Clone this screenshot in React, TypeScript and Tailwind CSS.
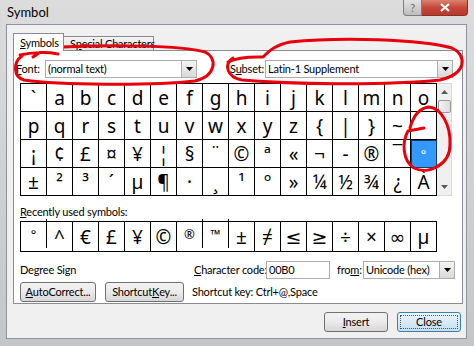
import React from "react";

// Word "Symbol" dialog, Windows 7 basic theme
const ui = "font-['Lato','Noto_Sans',sans-serif] text-[11px] tracking-[-0.2px] leading-[16px] text-black whitespace-nowrap";
const glyph = "font-['Noto_Sans','DejaVu_Sans',sans-serif] tracking-normal";

const rows: string[][] = [
  ["`", "a", "b", "c", "d", "e", "f", "g", "h", "i", "j", "k", "l", "m", "n", "o"],
  ["p", "q", "r", "s", "t", "u", "v", "w", "x", "y", "z", "{", "|", "}", "~", "\u00a0"],
  ["¡", "¢", "£", "¤", "¥", "¦", "§", "¨", "©", "ª", "«", "¬", "-", "®", "¯", "°"],
  ["±", "²", "³", "´", "µ", "¶", "·", "¸", "¹", "º", "»", "¼", "½", "¾", "¿", "À"],
];

const recent = ["°", "^", "€", "£", "¥", "©", "®", "™", "±", "≠", "≤", "≥", "÷", "×", "∞", "µ"];

const DropArrow = () => (
  <div className="w-[15px] h-full border-l border-[#abadb3] bg-gradient-to-b from-[#f4f4f4] to-[#d9d9d9] flex items-center justify-center">
    <svg width="7" height="4" viewBox="0 0 7 4">
      <path d="M0 0 H7 L3.5 4 Z" fill="#000" />
    </svg>
  </div>
);

const Select = ({ value, width }: { value: string; width: string }) => (
  <div className={`${width} h-[18px] border border-[#abadb3] bg-white flex items-stretch`}>
    <div className="flex-1 pl-[2px] leading-[16px] overflow-hidden">{value}</div>
    <DropArrow />
  </div>
);

const Button = ({ children, width, def }: { children: React.ReactNode; width: string; def?: boolean }) => (
  <div
    className={`${width} h-[20px] rounded-[3px] border flex items-center justify-center ${
      def
        ? "border-[#3c7fb1] bg-gradient-to-b from-[#eaf6fd] to-[#c6def0] outline-1 outline-dotted outline-[#555] -outline-offset-4"
        : "border-[#707070] bg-gradient-to-b from-[#f2f2f2] via-[#ebebeb] to-[#d6d6d6]"
    }`}
  >
    {children}
  </div>
);

export default function App() {
  return (
    <div className={`${ui} relative w-[474px] h-[346px] overflow-hidden bg-gradient-to-b from-[#dcdcdc] via-[#cfd1d3] to-[#c3c6c9]`}>
      {/* Title bar */}
      <div className="h-[24px] flex items-start justify-between">
        <div className="pl-[7px] pt-[4px] text-[13px] leading-[17px] tracking-normal">Symbol</div>
        <div className="flex mr-[6px]">
          <div className="w-[19px] h-[16px] border border-[#7d7d7d] border-t-0 rounded-bl-[4px] bg-gradient-to-b from-[#e3e3e3] to-[#bdbdbd] flex items-center justify-center text-[11px] text-[#6a6a6a]">
            ?
          </div>
          <div className="w-[46px] h-[16px] border border-[#8a2e26] border-t-0 border-l-0 rounded-br-[4px] bg-gradient-to-b from-[#d9826f] via-[#c7473a] to-[#b63a2c] flex items-center justify-center">
            <svg width="10" height="9" viewBox="0 0 10 9">
              <path d="M1 1 L9 8 M9 1 L1 8" stroke="#fff" strokeWidth="2.2" />
            </svg>
          </div>
        </div>
      </div>

      {/* Client area */}
      <div className="ml-[6px] w-[461px] h-[315px] bg-[#f0f0f0] border border-[#8f9399]">
        {/* Tabs */}
        <div className="ml-[6px] mt-[8px] flex items-end h-[17px]">
          <div className="h-[18px] w-[51px] border border-b-0 border-[#898c95] bg-white pl-[6px] leading-[17px] relative z-10 -mb-[1px]">
            <span className="underline">S</span>ymbols
          </div>
          <div className="h-[14px] w-[90px] border border-b-0 border-l-0 border-[#898c95] bg-gradient-to-b from-[#f3f3f3] to-[#e5e5e5] pl-[6px] leading-[13px]">
            S<span className="underline">p</span>ecial Characters
          </div>
        </div>

        {/* Tab panel */}
        <div className="ml-[6px] w-[450px] h-[254px] border border-[#898c95] bg-white flex flex-col">
          {/* Font / Subset */}
          <div className="mt-[9px] flex items-center h-[18px]">
            <span className="ml-[2px] w-[29px]">
              <span className="underline">F</span>ont:
            </span>
            <Select value="(normal text)" width="w-[152px]" />
            <span className="ml-[33px] w-[35px]">
              S<span className="underline">u</span>bset:
            </span>
            <Select value="Latin-1 Supplement" width="w-[188px]" />
          </div>

          {/* Symbol grid + scrollbar */}
          <div className="mt-[5px] ml-[6px] flex">
            <div className="border-l border-t border-black grid grid-cols-[repeat(16,26px)]">
              {rows.flat().map((c, i) => {
                const sel = c === "°";
                return (
                  <div
                    key={i}
                    className={`h-[28px] border-r border-b border-black flex items-center justify-center ${glyph} ${
                      sel ? "bg-[#3399ff] text-white text-[13px] outline outline-1 outline-[#1b3b63] -outline-offset-1" : "text-[19px]"
                    }`}
                  >
                    {c}
                  </div>
                );
              })}
            </div>
            <div className="w-[15px] h-[113px] bg-[#f0f0f0] border-r border-t border-b border-[#d8d8d8] flex flex-col items-center">
              <svg className="mt-[6px]" width="7" height="4" viewBox="0 0 7 4">
                <path d="M0 4 L3.5 0 L7 4 Z" fill="#5a5a5a" />
              </svg>
              <div className="mt-[6px] w-[13px] h-[13px] rounded-[2px] border border-[#9a9a9a] bg-gradient-to-r from-[#f4f4f4] to-[#dcdcdc]" />
              <div className="flex-1" />
              <svg className="mb-[6px]" width="7" height="4" viewBox="0 0 7 4">
                <path d="M0 0 L7 0 L3.5 4 Z" fill="#5a5a5a" />
              </svg>
            </div>
          </div>

          {/* Recently used */}
          <div className="mt-[8px] ml-[6px]">
            <span className="underline">R</span>ecently used symbols:
          </div>
          <div className="mt-[1px] ml-[6px] flex border-l border-t border-b border-black w-fit">
            {recent.map((c, i) => (
              <div
                key={i}
                className={`w-[26px] h-[29px] border-r border-black flex items-center justify-center ${glyph} ${
                  c === "°" || c === "®" || c === "™" ? "text-[13px] -translate-y-[3px]" : "text-[19px]"
                }`}
              >
                {c}
              </div>
            ))}
          </div>

          {/* Name + character code */}
          <div className="mt-[9px] flex items-center h-[18px]">
            <span className="ml-[6px] w-[174px]">Degree Sign</span>
            <span className="w-[72px]">
              <span className="underline">C</span>haracter code:
            </span>
            <div className="w-[64px] h-[18px] border border-[#abadb3] bg-white pl-[2px] leading-[16px]">00B0</div>
            <span className="ml-[7px] w-[26px]">
              fro<span className="underline">m</span>:
            </span>
            <Select value="Unicode (hex)" width="w-[92px]" />
          </div>

          {/* AutoCorrect / Shortcut */}
          <div className="mt-[3px] ml-[6px] flex items-center">
            <Button width="w-[76px]">
              <span className="underline">A</span>utoCorrect...
            </Button>
            <div className="w-[9px]" />
            <Button width="w-[79px]">
              Shortcut <span className="underline">K</span>ey...
            </Button>
            <span className="ml-[8px]">Shortcut key: Ctrl+@,Space</span>
          </div>
        </div>

        {/* Dialog buttons */}
        <div className="mt-[8px] flex justify-end pr-[5px] gap-[9px]">
          <Button width="w-[64px]">
            <span className="underline">I</span>nsert
          </Button>
          <Button width="w-[64px]" def>
            Close
          </Button>
        </div>
      </div>

      {/* Hand-drawn red annotations */}
      <svg className="absolute inset-0 pointer-events-none" width="474" height="346" viewBox="0 0 474 346" fill="none">
        <g stroke="#e8000b" strokeWidth="3" strokeLinecap="round" strokeLinejoin="round">
          <path d="M20 55 C32 52 48 52 58 54 M33 57 C42 50 52 47 62 47 C110 45 180 45 205 52 C218 58 216 76 195 81 C150 86 60 85 24 80 C13 77 13 62 22 56" />
          <path d="M228 62 C240 56 254 57 263 57 C270 50 276 45 290 42 C340 37 420 39 452 48 C468 56 466 74 440 80 C380 86 290 84 242 80 C226 77 224 64 233 58" />
          <path d="M424 128 L408 131 C402 142 402 160 414 168 C428 175 450 165 450 145 C451 125 441 108 429 107 C419 108 413 117 410 128" />
        </g>
      </svg>
    </div>
  );
}
